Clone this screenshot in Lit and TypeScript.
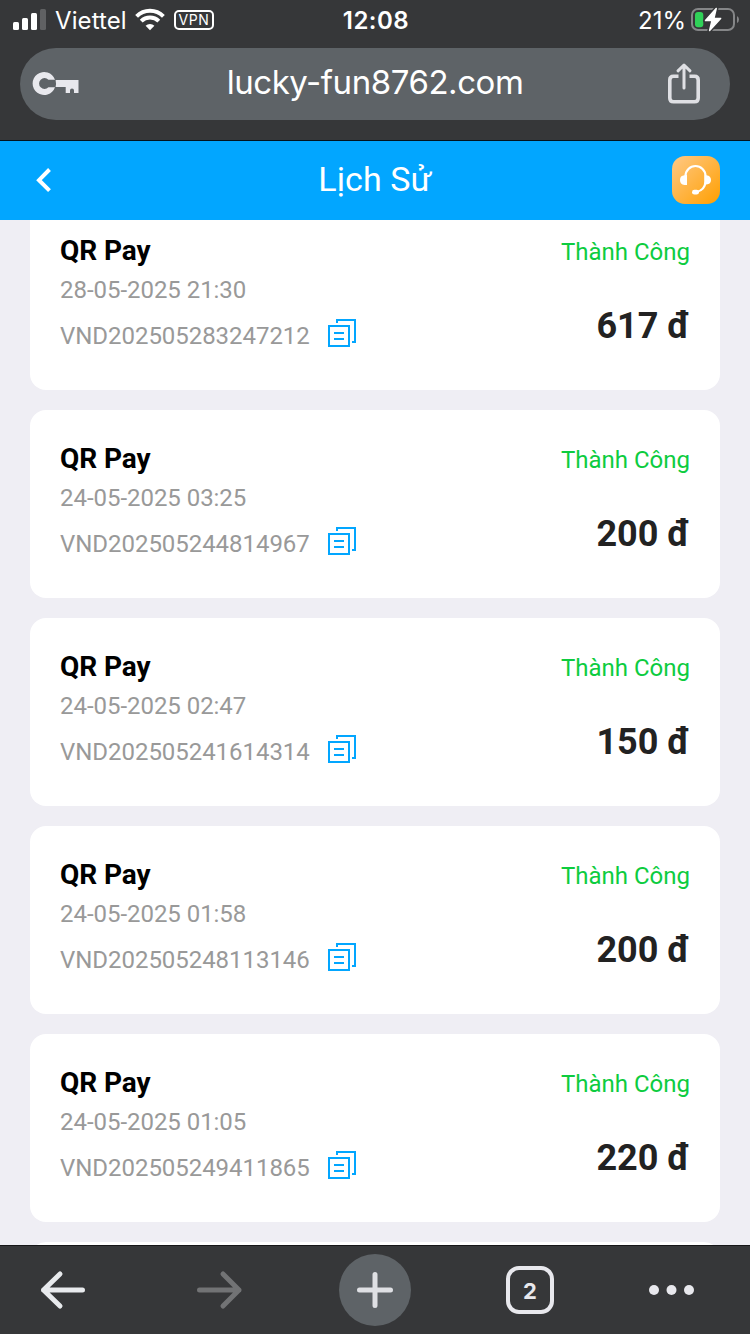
import { LitElement, html, css } from "lit";
import { customElement, property } from "lit/decorators.js";

interface Transaction {
  time: string;
  code: string;
  amount: string;
}

const TRANSACTIONS: Transaction[] = [
  { time: "28-05-2025 21:30", code: "VND202505283247212", amount: "617 đ" },
  { time: "24-05-2025 03:25", code: "VND202505244814967", amount: "200 đ" },
  { time: "24-05-2025 02:47", code: "VND202505241614314", amount: "150 đ" },
  { time: "24-05-2025 01:58", code: "VND202505248113146", amount: "200 đ" },
  { time: "24-05-2025 01:05", code: "VND202505249411865", amount: "220 đ" },
];

@customElement("status-bar")
class StatusBar extends LitElement {
  static styles = css`
    :host {
      display: grid;
      grid-template-columns: 1fr auto 1fr;
      align-items: center;
      height: 40px;
      padding: 0 11px 0 13px;
      font-family: Inter, "Noto Sans", sans-serif;
      font-size: 24px;
      line-height: 38px;
      color: #fff;
    }
    svg { display: block; flex: none; }
    .left { display: flex; align-items: center; }
    .carrier { margin-left: 9px; width: 72px; padding-top: 2px; letter-spacing: 0.1px; white-space: nowrap; }
    .wifi { margin: 0 0 1px 8px; }
    .vpn {
      box-sizing: border-box;
      width: 40px;
      height: 20px;
      margin-left: 9px;
      border: 2px solid #fff;
      border-radius: 5px;
      font-size: 14px;
      font-weight: 400;
      line-height: 16px;
      text-align: center;
      letter-spacing: 0.6px;
    }
    .clock { padding-top: 2px; font-weight: 600; letter-spacing: 0.5px; }
    .right { display: flex; align-items: center; justify-content: flex-end; gap: 5px; }
    .right svg { margin-bottom: 1px; }
    .percent { padding-top: 2px; letter-spacing: 0; }
  `;

  render() {
    return html`
      <div class="left">
        <svg width="33" height="22" viewBox="13 9 33 22" fill="#fff">
          <rect x="13" y="22" width="6" height="8" rx="1.5" />
          <rect x="22" y="18" width="6" height="12" rx="1.5" />
          <rect x="31" y="13" width="6" height="17" rx="1.5" />
          <rect x="40" y="9" width="6" height="21" rx="1.5" fill="#606163" />
        </svg>
        <span class="carrier">Viettel</span>
        <svg class="wifi" width="30" height="23" viewBox="0 0 30 23" fill="none" stroke="#fff" stroke-width="4">
          <path d="M1.6 8.3a19 19 0 0 1 26.8 0" />
          <path d="M6.2 13.2a12.5 12.5 0 0 1 17.6 0" />
          <path d="M15 22.2 10.6 17.7a6.3 6.3 0 0 1 8.8 0z" fill="#fff" stroke="none" />
        </svg>
        <span class="vpn">VPN</span>
      </div>
      <span class="clock">12:08</span>
      <div class="right">
        <span class="percent">21%</span>
        <svg width="48" height="25" viewBox="691 7 48 25">
          <rect x="692" y="9" width="42" height="21" rx="6" fill="none" stroke="#858688" stroke-width="2" />
          <path d="M737 16q2 1.200 2 3.500t-2 3.500z" fill="#858688" />
          <rect x="695" y="12" width="8.300" height="15.300" rx="3" fill="#30d158" />
          <path d="M716.500 8 705 20.800h6.500L709.300 31 721 18.200h-6.600z" fill="#363739" stroke="#363739" stroke-width="4" stroke-linejoin="round" />
          <path d="M716.200 8.500 705.500 20.600h6.500L709.600 30.500 720.600 18.400h-6.700z" fill="#fff" stroke="#fff" stroke-width="1.500" stroke-linejoin="round" />
        </svg>
      </div>
    `;
  }
}

@customElement("address-bar")
class AddressBar extends LitElement {
  static styles = css`
    :host {
      display: grid;
      grid-template-columns: 64px 1fr 64px;
      align-items: center;
      height: 72px;
      margin: 8px 20px 20px;
      border-radius: 36px;
      background: #5e6367;
      color: #fff;
      font-family: Inter, "Noto Sans", sans-serif;
      font-size: 33px;
    }
    svg { display: block; }
    .key { margin-left: 12px; }
    .share { justify-self: start; }
    .url { text-align: center; line-height: 68px; height: 72px; letter-spacing: -0.45px; }
  `;

  render() {
    return html`
      <svg class="key" width="48" height="26" viewBox="32 71 48 26" fill="#e8e8ed">
        <path d="M55 79.800A11.500 11.500 0 1 0 55 87.200H48.400A5.400 5.400 0 1 1 48.400 79.800z" />
        <path d="M55.600 80H78.500V93H74V90.500A2 2 0 0 0 70 90.500V93H65.700V87H55.600Q56.400 83.500 55.600 80z" />
      </svg>
      <span class="url">lucky-fun8762.com</span>
      <svg class="share" width="36" height="44" viewBox="666 62.500 36 44" fill="none" stroke="#dfe0e4" stroke-width="3.600" stroke-linecap="round" stroke-linejoin="round">
        <path d="M678.500 76.800H673.500Q669.800 76.800 669.800 80.500V98.500Q669.800 102.200 673.500 102.200H694.500Q698.200 102.200 698.200 98.500V80.500Q698.200 76.800 694.500 76.800H689.500" stroke-linecap="butt" />
        <path d="M684 88.500V66M678 71.300 684 65.500 690 71.300" stroke-width="3" />
      </svg>
    `;
  }
}

@customElement("page-header")
class PageHeader extends LitElement {
  static styles = css`
    :host {
      box-sizing: border-box;
      display: grid;
      grid-template-columns: 48px 1fr 48px;
      align-items: center;
      height: 80px;
      padding: 0 30px 1px;
      border-top: 1px solid #02131f;
      background: #02a6ff;
      color: #fff;
      font-family: Roboto, "Noto Sans", sans-serif;
      font-size: 34px;
    }
    svg { display: block; }
    .title { text-align: center; letter-spacing: 0.1px; line-height: 76px; height: 78px; }
  `;

  render() {
    return html`
      <svg width="48" height="48" viewBox="30 156 48 48" fill="none" stroke="#fff" stroke-width="4">
        <path d="M49.500 169.500 39 180.200 49.500 190.700" />
      </svg>
      <span class="title">Lịch Sử</span>
      <svg width="48" height="48" viewBox="0 0 48 48">
        <defs>
          <linearGradient id="amber" x1="0" y1="0" x2="1" y2="1">
            <stop offset="0" stop-color="#ffc986" />
            <stop offset="1" stop-color="#ff9f00" />
          </linearGradient>
        </defs>
        <rect width="48" height="48" rx="13" fill="url(#amber)" />
        <path d="M13.500 24V20A10 10 0 0 1 33.500 20V25.500Q33 34 24.500 36" fill="none" stroke="#fff" stroke-width="2.200" />
        <path d="M15 19V29H12.500Q8 28.500 8 24T12.500 19.200zM32.500 19.200H34.500Q39 20 39 24T34.500 28.600H32.500z" fill="#fff" />
        <rect x="20" y="33.800" width="7" height="4.800" rx="2.400" fill="#fff" />
      </svg>
    `;
  }
}

@customElement("transaction-card")
class TransactionCard extends LitElement {
  @property({ attribute: false }) item!: Transaction;

  static styles = css`
    :host {
      box-sizing: border-box;
      display: flex;
      flex: none;
      justify-content: space-between;
      height: 188px;
      padding: 30px;
      border-radius: 16px;
      background: #fff;
      font-family: Roboto, "Noto Sans", sans-serif;
      font-size: 24px;
      white-space: nowrap;
    }
    .name { font-size: 28px; font-weight: 700; line-height: 37px; letter-spacing: -0.1px; color: #000; }
    .time { line-height: 42px; letter-spacing: -0.04px; color: #999; }
    .code { display: flex; line-height: 50px; letter-spacing: -0.04px; color: #999; }
    .number { width: 268px; }
    .code svg { display: block; margin-top: 8px; }
    .result { text-align: right; }
    .state { line-height: 40px; color: #0dcc3f; }
    .amount { margin-top: 24px; font-size: 36px; font-weight: 700; line-height: 60px; color: #222; }
  `;

  render() {
    if (!this.item) return null;
    return html`
      <div>
        <div class="name">QR Pay</div>
        <div class="time">${this.item.time}</div>
        <div class="code">
          <span class="number">${this.item.code}</span>
          <svg width="28" height="28" viewBox="0 0 28 28" fill="none" stroke="#02a6ff" stroke-width="2">
            <path d="M1 7H21V27H1zM6 14H16M6 20H16M9 4V1H27V23H24" />
          </svg>
        </div>
      </div>
      <div class="result">
        <div class="state">Thành Công</div>
        <div class="amount">${this.item.amount}</div>
      </div>
    `;
  }
}

@customElement("browser-toolbar")
class BrowserToolbar extends LitElement {
  static styles = css`
    :host {
      box-sizing: border-box;
      display: grid;
      grid-template-columns: repeat(5, 156px);
      justify-content: center;
      justify-items: center;
      align-items: center;
      height: 89px;
      border-top: 1px solid #161618;
      background: #363739;
      font-family: Inter, "Noto Sans", sans-serif;
      overflow: hidden;
    }
    svg { display: block; }
    .new-tab {
      display: grid;
      place-items: center;
      width: 72px;
      height: 72px;
      border-radius: 50%;
      background: #5e6367;
    }
    .tabs {
      box-sizing: border-box;
      width: 48px;
      height: 48px;
      margin-right: 2px;
      border: 4px solid #e8e8ed;
      border-radius: 13px;
      color: #e8e8ed;
      font-size: 22px;
      font-weight: 700;
      line-height: 42px;
      text-align: center;
    }
    .more { margin-right: 30px; }
  `;

  render() {
    return html`
      <svg width="48" height="40" viewBox="39 1270 48 40" fill="none" stroke="#e8eaed" stroke-width="5" stroke-linecap="round" stroke-linejoin="round">
        <path d="M60 1274 43.500 1290 60 1306M43.500 1290H82.500" />
      </svg>
      <svg width="48" height="40" viewBox="195 1270 48 40" fill="none" stroke="#727375" stroke-width="5" stroke-linecap="round" stroke-linejoin="round">
        <path d="M223 1274 239 1290 223 1306M239 1290H199.500" />
      </svg>
      <div class="new-tab">
        <svg width="38" height="38" viewBox="0 0 38 38" stroke="#dfe0e4" stroke-width="5" stroke-linecap="round">
          <path d="M19 3.500V34.500M3.500 19H34.500" />
        </svg>
      </div>
      <div class="tabs">2</div>
      <svg class="more" width="46" height="10" viewBox="0 0 46 10" fill="#e8e8ed">
        <circle cx="5" cy="5" r="5" />
        <circle cx="22.500" cy="5" r="5" />
        <circle cx="40" cy="5" r="5" />
      </svg>
    `;
  }
}

@customElement("app-root")
class AppRoot extends LitElement {
  static styles = css`
    :host {
      display: flex;
      flex-direction: column;
      width: 750px;
      height: 1334px;
      overflow: hidden;
      background: #363739;
    }
    status-bar, address-bar, page-header, browser-toolbar { flex: none; }
    status-bar { box-sizing: border-box; }
    .history {
      flex: 1;
      min-height: 0;
      overflow: hidden;
      background: #efeef4;
    }
    .list {
      display: flex;
      flex-direction: column;
      gap: 20px;
      margin-top: -18px;
      padding: 0 30px;
    }
    .next { height: 188px; flex: none; border-radius: 16px; background: #fff; }
  `;

  render() {
    return html`
      <status-bar></status-bar>
      <address-bar></address-bar>
      <page-header></page-header>
      <div class="history">
        <div class="list">
          ${TRANSACTIONS.map((t) => html`<transaction-card .item=${t}></transaction-card>`)}
          <div class="next"></div>
        </div>
      </div>
      <browser-toolbar></browser-toolbar>
    `;
  }
}
